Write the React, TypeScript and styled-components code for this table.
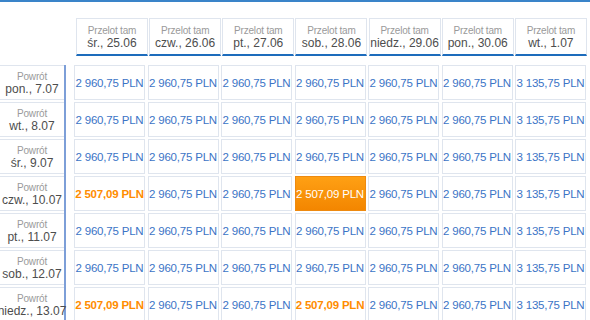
import styled, { createGlobalStyle, css } from "styled-components";

const Global = createGlobalStyle`
  html, body {
    margin: 0;
    padding: 0;
    background: #fff;
  }
  body {
    font-family: "Liberation Sans", Arial, sans-serif;
  }
`;

const Page = styled.div`
  width: 590px;
  height: 320px;
  overflow: hidden;
  border-top: 2px solid #3a84c9;
  box-sizing: border-box;
`;

const HeadRow = styled.div`
  display: grid;
  grid-template-columns: repeat(7, 72px);
  column-gap: 1.15px;
  margin: 16px 0 0 76px;
`;

const HeadCell = styled.div`
  height: 38px;
  box-sizing: border-box;
  border: 1px solid #dfe5ee;
  border-bottom: 2px solid #1d6cbc;
  display: flex;
  flex-direction: column;
  align-items: center;
  justify-content: center;
  white-space: nowrap;
`;

const SmallLabel = styled.span`
  font-size: 10px;
  line-height: 13px;
  letter-spacing: -0.2px;
  color: #9a9a9a;
`;

const DateLabel = styled.span`
  font-size: 12px;
  line-height: 13px;
  color: #4d4d4d;
`;

const Body = styled.div`
  display: flex;
  margin-top: 9px;
`;

const SideCol = styled.div`
  display: flex;
  flex-direction: column;
  gap: 2px;
  width: 65px;
  margin-left: -1px;
  border-right: 2px solid #7d9fd8;
`;

const SideCell = styled.div`
  height: 35px;
  box-sizing: border-box;
  border: 1px solid #dfe5ee;
  border-right: none;
  display: flex;
  flex-direction: column;
  align-items: center;
  justify-content: center;
  white-space: nowrap;
`;

const Grid = styled.div`
  display: grid;
  grid-template-columns: repeat(7, 1fr);
  grid-auto-rows: 35px;
  gap: 2px 2.5px;
  width: 512px;
  margin-left: 8px;
`;

type Kind = "normal" | "cheap" | "active";

const PriceCell = styled.div<{ $kind: Kind }>`
  box-sizing: border-box;
  border: 1px solid #dfe5ee;
  display: flex;
  align-items: center;
  justify-content: center;
  white-space: nowrap;
  font-size: 11.5px;
  letter-spacing: -0.2px;
  color: #3b74c6;

  ${(p) =>
    p.$kind === "cheap" &&
    css`
      color: #ff8c00;
      font-weight: bold;
    `}

  ${(p) =>
    p.$kind === "active" &&
    css`
      color: #fff;
      border-color: #ee8a10;
      background: linear-gradient(#ffa014, #f38600);
    `}
`;

const outDates = [
  "śr., 25.06",
  "czw., 26.06",
  "pt., 27.06",
  "sob., 28.06",
  "niedz., 29.06",
  "pon., 30.06",
  "wt., 1.07",
];

const backDates = [
  "pon., 7.07",
  "wt., 8.07",
  "śr., 9.07",
  "czw., 10.07",
  "pt., 11.07",
  "sob., 12.07",
  "niedz., 13.07",
];

const base = "2 960,75 PLN";
const last = "3 135,75 PLN";
const low = "2 507,09 PLN";

const rows: { price: string; kind: Kind }[][] = backDates.map((_, r) =>
  outDates.map((__, c) => {
    if (c === 6) return { price: last, kind: "normal" };
    if (r === 3 && c === 0) return { price: low, kind: "cheap" };
    if (r === 3 && c === 3) return { price: low, kind: "active" };
    if (r === 6 && (c === 0 || c === 3)) return { price: low, kind: "cheap" };
    return { price: base, kind: "normal" };
  })
);

export default function App() {
  return (
    <Page>
      <Global />
      <HeadRow>
        {outDates.map((d) => (
          <HeadCell key={d}>
            <SmallLabel>Przelot tam</SmallLabel>
            <DateLabel>{d}</DateLabel>
          </HeadCell>
        ))}
      </HeadRow>
      <Body>
        <SideCol>
          {backDates.map((d) => (
            <SideCell key={d}>
              <SmallLabel>Powrót</SmallLabel>
              <DateLabel>{d}</DateLabel>
            </SideCell>
          ))}
        </SideCol>
        <Grid>
          {rows.flat().map((cell, i) => (
            <PriceCell key={i} $kind={cell.kind}>
              {cell.price}
            </PriceCell>
          ))}
        </Grid>
      </Body>
    </Page>
  );
}
